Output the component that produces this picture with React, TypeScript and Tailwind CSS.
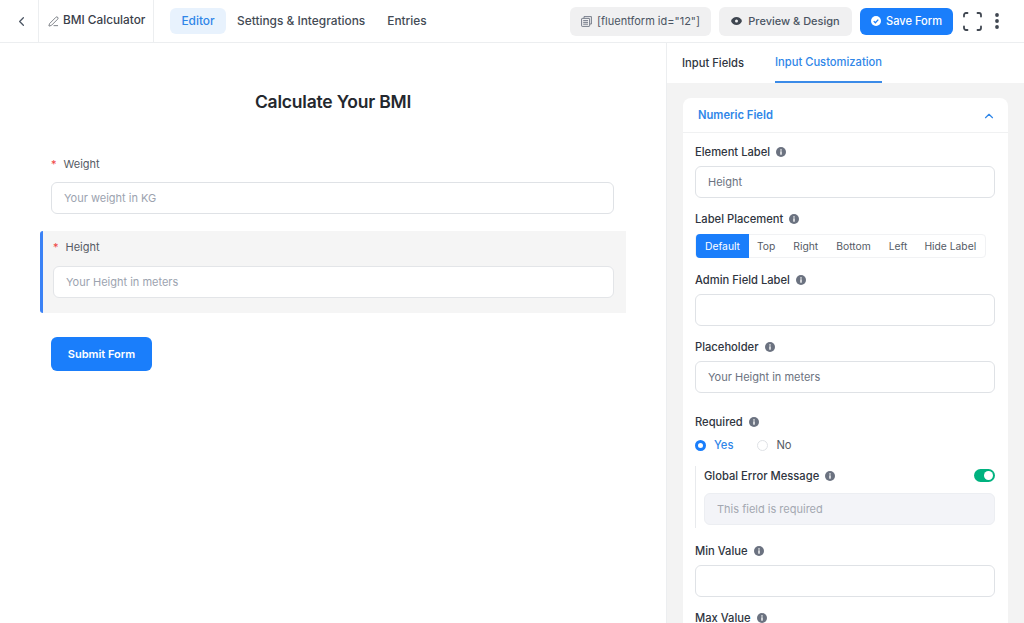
import { ChevronLeft, ChevronUp, PenLine } from "lucide-react";

function InfoDot() {
  return (
    <svg width="10" height="10" viewBox="0 0 10 10" className="shrink-0">
      <circle cx="5" cy="5" r="5" fill="#6b7280" />
      <rect x="4.3" y="4.3" width="1.4" height="3.4" fill="#fff" />
      <rect x="4.3" y="2.3" width="1.4" height="1.3" fill="#fff" />
    </svg>
  );
}

function FieldLabel({ text, className = "" }: { text: string; className?: string }) {
  return (
    <div className={`flex h-4 items-center gap-[6px] pt-[1px] text-[11.2px] font-medium leading-4 text-[#2f3540] ${className}`}>
      {text}
      <InfoDot />
    </div>
  );
}

function TextBox({ value, className = "" }: { value?: string; className?: string }) {
  return (
    <div className={`flex h-8 items-center rounded-md border border-[#dfe2e6] bg-white px-3 pt-[1px] text-[11px] text-[#6b7280] ${className}`}>
      {value}
    </div>
  );
}

export default function App() {
  const placements = [
    { name: "Top", gap: "ml-[8px]" },
    { name: "Right", gap: "ml-[18px]" },
    { name: "Bottom", gap: "ml-[18px]" },
    { name: "Left", gap: "ml-[18px]" },
    { name: "Hide Label", gap: "ml-[17px]" },
  ];

  return (
    <div className="flex h-[623px] w-[1024px] flex-col overflow-hidden bg-white font-['Inter',sans-serif]">
      <header className="flex h-[43px] shrink-0 items-stretch border-b border-[#eceef0] pr-6">
        <div className="flex w-[39px] items-center justify-center border-r border-[#eceef0] pl-[4px] text-[#4b5563]">
          <ChevronLeft size={15} />
        </div>
        <div className="flex w-[115px] items-center gap-[4px] border-r border-[#eceef0] pl-[9px] text-[11.8px] font-medium text-[#3a404a]">
          <PenLine size={11} strokeWidth={1.4} />
          BMI Calculator
        </div>
        <nav className="ml-4 flex items-center text-[11.9px] font-medium text-[#444b55]">
          <span className="flex h-[26px] w-[56px] items-center justify-center rounded-md bg-[#e8f2fd] text-[#2f86e8]">Editor</span>
          <span className="ml-[11px]">Settings &amp; Integrations</span>
          <span className="ml-[22px]">Entries</span>
        </nav>
        <div className="ml-auto flex items-center">
          <div className="flex h-[29px] w-[141px] items-center justify-center gap-[5px] rounded-md bg-[#f0f0f1] text-[11px] text-[#4b5563]">
            <svg width="11" height="11" viewBox="0 0 11 11" fill="none" stroke="#6b7280" strokeWidth="0.9">
              <path d="M3 2V.6h7.4V8H9" />
              <rect x=".6" y="2.4" width="8" height="8" rx=".6" />
              <path d="M2.2 4.6h4.8M2.2 6.4h4.8M2.2 8.2h4.8" />
            </svg>
            [fluentform id="12"]
          </div>
          <div className="ml-2 flex h-[29px] w-[133px] items-center justify-center gap-[6px] rounded-md bg-[#f0f0f1] text-[11px] font-medium text-[#4b5563]">
            <svg width="11" height="8" viewBox="0 0 11 8">
              <path d="M5.5 0C3 0 1 1.6 0 4c1 2.4 3 4 5.5 4S10 6.4 11 4C10 1.6 8 0 5.5 0z" fill="#3f4650" />
              <circle cx="5.5" cy="4" r="1.5" fill="#f0f0f1" />
            </svg>
            Preview &amp; Design
          </div>
          <div className="ml-2 flex h-[27px] w-[93px] items-center justify-center gap-[5px] rounded-md bg-[#1a7efb] text-[11.1px] font-medium text-white">
            <svg width="10" height="10" viewBox="0 0 11 11">
              <circle cx="5.5" cy="5.5" r="5.5" fill="#fff" />
              <path d="M3 5.6l1.8 1.8L8 4" fill="none" stroke="#1a7efb" strokeWidth="1.4" />
            </svg>
            Save Form
          </div>
          <svg width="19" height="19" viewBox="0 0 19 19" fill="none" stroke="#3f4650" strokeWidth="1.8" strokeLinecap="round" className="ml-[10px]">
            <path d="M1 4.5V3a2 2 0 0 1 2-2h1.5M14.5 1H16a2 2 0 0 1 2 2v1.5M18 14.500V16a2 2 0 0 1-2 2h-1.500M4.500 18H3a2 2 0 0 1-2-2v-1.500" />
          </svg>
          <svg width="6" height="16" viewBox="0 0 6 16" fill="#3f4650" className="ml-3">
            <circle cx="3" cy="2" r="1.9" />
            <circle cx="3" cy="8" r="1.9" />
            <circle cx="3" cy="14" r="1.9" />
          </svg>
        </div>
      </header>

      <div className="flex min-h-0 flex-1">
        <main className="w-[666px] shrink-0 pt-[47px]">
          <h1 className="text-center text-[17.5px] font-semibold leading-[24px] tracking-[-0.2px] text-[#24282e]">Calculate Your BMI</h1>

          <div className="mt-[42px] pl-[51px] pr-[52px]">
            <div className="flex h-4 items-center gap-[7px] text-[11px] text-[#555b65]">
              <span className="text-[#ef4444]">*</span>
              Weight
            </div>
            <div className="mt-[10px] flex h-8 items-center rounded-md border border-[#dfe2e6] px-3 pt-[1px] text-[11px] text-[#9ca3af]">Your weight in KG</div>
          </div>

          <div className="mx-10 mt-[17px] h-[82px] rounded-l-[3px] border-l-[3px] border-[#3b82f6] bg-[#f5f5f5] pl-[10px] pr-3 pt-2">
            <div className="flex h-4 items-center gap-[7px] text-[11px] text-[#555b65]">
              <span className="text-[#ef4444]">*</span>
              Height
            </div>
            <div className="mt-[11px] flex h-8 items-center rounded-md border border-[#e3e5e8] bg-white px-3 pt-[1px] text-[11px] text-[#9ca3af]">Your Height in meters</div>
          </div>

          <div className="ml-[51px] mt-6 flex h-[34px] w-[101px] items-center justify-center rounded-md bg-[#1a7efb] pt-[1px] text-[11px] font-semibold text-white">Submit Form</div>
        </main>

        <aside className="min-w-0 flex-1 border-l border-[#eceef0] bg-[#f3f3f3]">
          <div className="flex h-10 items-stretch bg-white pl-[15px] text-[11.2px] font-medium text-[#2f3540]">
            <span className="flex items-center">Input Fields</span>
            <span className="ml-[31px] flex items-center border-b-2 border-[#3b8be8] text-[#2f86e8]">Input Customization</span>
          </div>

          <section className="mx-4 mt-[15px] rounded-lg bg-white">
            <div className="flex h-[35px] items-center justify-between border-b border-[#f0f1f2] pl-[15px] pr-3 pt-[1px] text-[11.2px] font-semibold text-[#2f86e8]">
              Numeric Field
              <ChevronUp size={14} />
            </div>
            <div className="pb-8 pl-3 pr-[13px] pt-[10px]">
              <FieldLabel text="Element Label" />
              <TextBox value="Height" className="mt-[7px]" />

              <FieldLabel text="Label Placement" className="mt-3" />
              <div className="mt-2 flex h-6 w-[291px] items-center rounded border border-[#f1f2f4] pt-[1px] text-[10.3px] text-[#555b65]">
                <span className="-mt-[1px] flex h-6 w-[53px] items-center justify-center rounded-l bg-[#1a7efb] pt-[1px] text-white">Default</span>
                {placements.map((item) => (
                  <span key={item.name} className={item.gap}>
                    {item.name}
                  </span>
                ))}
              </div>

              <FieldLabel text="Admin Field Label" className="mt-[13px]" />
              <TextBox className="mt-[7px]" />

              <FieldLabel text="Placeholder" className="mt-3" />
              <TextBox value="Your Height in meters" className="mt-[7px]" />

              <FieldLabel text="Required" className="mt-5" />
              <div className="mt-2 flex h-4 items-center text-[11.2px]">
                <span className="size-[11px] rounded-full border-[3.5px] border-[#1a7efb] bg-white" />
                <span className="ml-2 font-medium text-[#2f86e8]">Yes</span>
                <span className="ml-6 size-[11px] rounded-full border border-[#dfe2e6]" />
                <span className="ml-2 text-[#555b65]">No</span>
              </div>

              <div className="mt-[13px] h-[62px] border-l border-[#e8eaed] pl-2">
                <div className="flex h-[18px] items-center justify-between">
                  <FieldLabel text="Global Error Message" />
                  <span className="flex h-[13px] w-[21px] items-center justify-end rounded-full bg-[#00b27f] pr-[2px]">
                    <span className="size-[9px] rounded-full bg-white" />
                  </span>
                </div>
                <div className="mt-[9px] flex h-8 items-center rounded-md border border-[#eceef2] bg-[#f3f4f8] px-3 text-[11px] text-[#a3a8b1]">This field is required</div>
              </div>

              <FieldLabel text="Min Value" className="mt-[14px]" />
              <TextBox className="mt-[7px]" />

              <FieldLabel text="Max Value" className="mt-3" />
            </div>
          </section>
        </aside>
      </div>
    </div>
  );
}
